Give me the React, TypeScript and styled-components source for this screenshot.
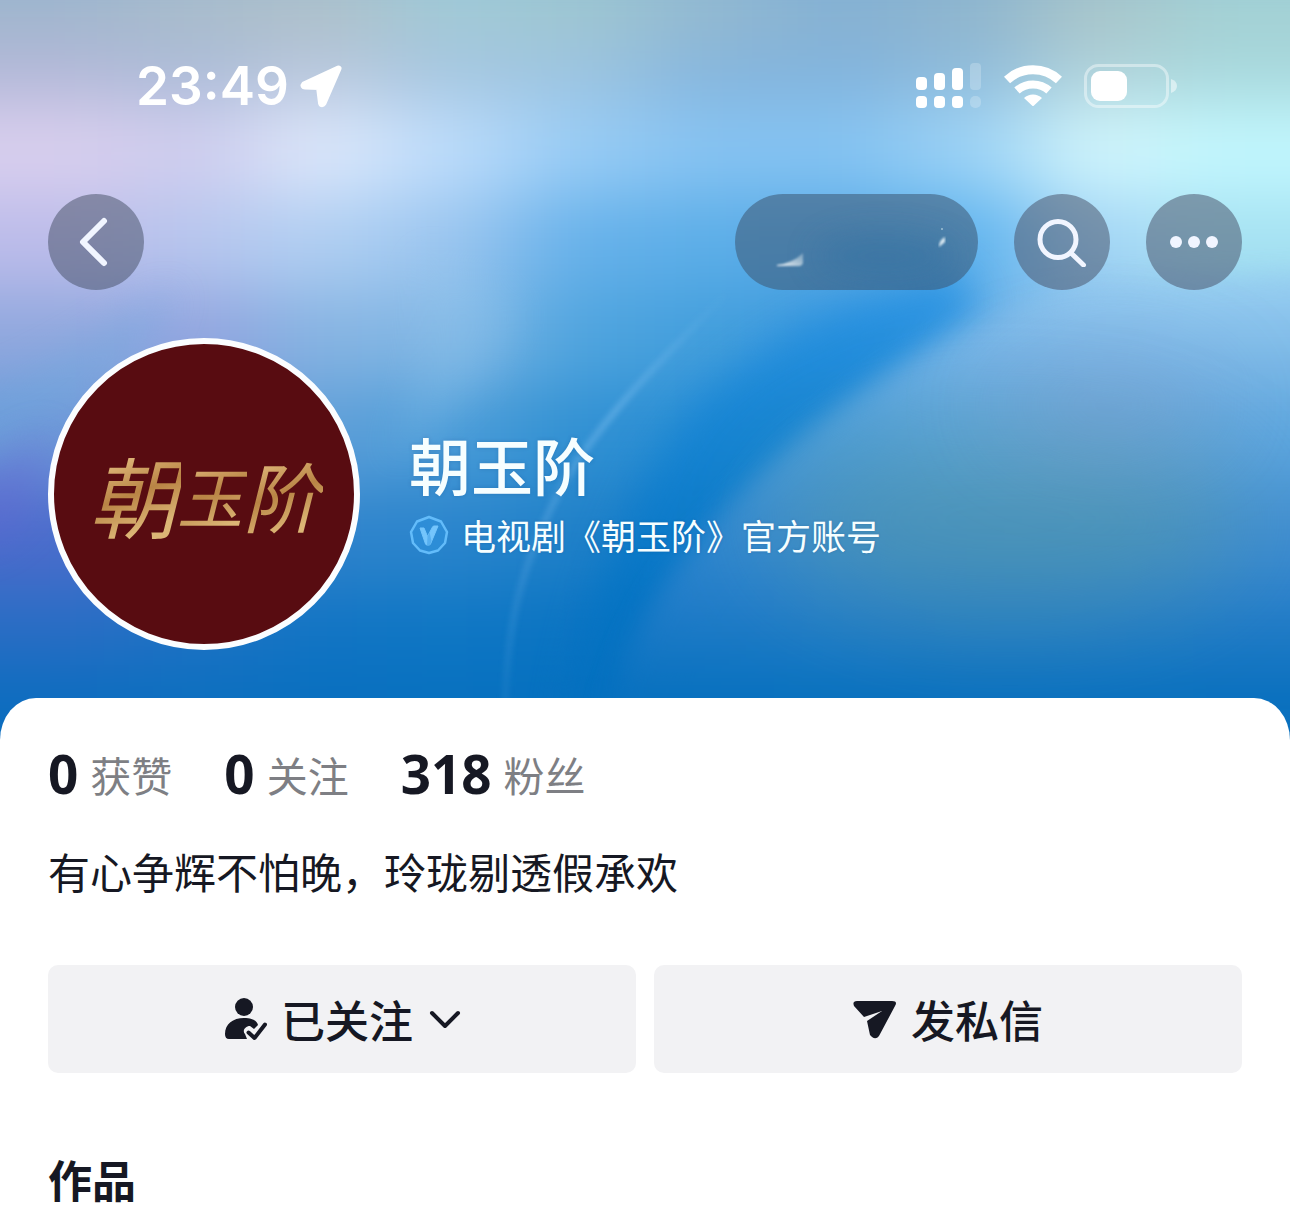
import React from "react";
import styled, { createGlobalStyle } from "styled-components";

const GlobalStyle = createGlobalStyle`
  *, *::before, *::after { box-sizing: border-box; }
  body {
    margin: 0;
    background: #ffffff;
    color: #161823;
    font-family: "Noto Sans CJK SC", sans-serif;
  }
  h1, h2, p, dl, dd, dt { margin: 0; font-weight: inherit; }
  button { font: inherit; color: inherit; border: 0; padding: 0; cursor: pointer; }
  svg { display: block; flex: none; }
`;

const Page = styled.main`
  min-height: 100vh;
`;

const Hero = styled.header`
  position: relative;
  overflow: hidden;
  padding: 58px 48px 90px;
  background: #2f8ed6;
`;

const Backdrop = styled.svg`
  position: absolute;
  inset: 0;
  width: 100%;
  height: 100%;
`;

const StatusBar = styled.div`
  position: relative;
  display: flex;
  align-items: center;
  justify-content: space-between;
  height: 56px;
  padding: 0 65px 0 88px;
  color: #ffffff;
`;

const Clock = styled.time`
  display: flex;
  align-items: center;
  gap: 10px;
  font: 600 53px/58px Inter, sans-serif;
`;

const Indicators = styled.div`
  display: flex;
  align-items: center;
  gap: 22px;
`;

const Toolbar = styled.nav`
  position: relative;
  display: flex;
  gap: 36px;
  margin-top: 80px;
`;

const RoundButton = styled.button<{ $wide?: boolean }>`
  display: flex;
  align-items: center;
  justify-content: center;
  width: ${(p) => (p.$wide ? "243px" : "96px")};
  height: 96px;
  margin-left: ${(p) => (p.$wide ? "auto" : "0")};
  border-radius: 48px;
  overflow: hidden;
  background: ${(p) => (p.$wide ? "rgba(62, 92, 120, 0.58)" : "rgba(70, 80, 104, 0.52)")};
  color: #f1f5ff;
`;

const Profile = styled.section`
  position: relative;
  display: flex;
  align-items: center;
  gap: 49px;
  margin-top: 48px;
`;

const Avatar = styled.div`
  display: flex;
  align-items: center;
  justify-content: center;
  flex: none;
  width: 312px;
  height: 312px;
  border: 6px solid #fbfdff;
  border-radius: 50%;
  background: #580c11;
`;

const Brush = styled.span<{ $size: number }>`
  margin: 0 -4px;
  padding: 0 4px;
  font-size: ${(p) => p.$size}px;
  line-height: 124px;
  font-style: italic;
  color: transparent;
  background: linear-gradient(160deg, #e6c184 20%, #b98445 50%, #dcb676 75%);
  background-clip: text;
  -webkit-background-clip: text;
`;

const Identity = styled.div`
  display: flex;
  flex-direction: column;
  gap: 10px;
  color: #f6feff;
`;

const Name = styled.h1`
  font-size: 62px;
  font-weight: 500;
  line-height: 72px;
  text-shadow: 0 0 4px rgba(0, 50, 110, 0.2);
`;

const Verified = styled.p`
  display: flex;
  align-items: center;
  gap: 12px;
  font-size: 35px;
  line-height: 50px;
  text-shadow: 0 0 3px rgba(0, 50, 110, 0.2);
`;

const Sheet = styled.section`
  position: relative;
  margin-top: -42px;
  padding: 46px 48px 16px;
  border-radius: 36px 36px 0 0 / 42px 42px 0 0;
  background: #ffffff;
`;

const Stats = styled.dl`
  display: flex;
  gap: 52px;
`;

const Stat = styled.div`
  display: flex;
  flex-direction: row-reverse;
  align-items: center;
  gap: 12px;
  line-height: 60px;
`;

const StatValue = styled.dd`
  font-family: "Noto Sans", sans-serif;
  font-size: 53px;
  font-weight: 700;
`;

const StatLabel = styled.dt`
  font-size: 41px;
  font-weight: 400;
  color: #7e7f84;
`;

const Bio = styled.p`
  margin-top: 37px;
  font-size: 42px;
  line-height: 60px;
`;

const Actions = styled.div`
  display: grid;
  grid-template-columns: 1fr 1fr;
  gap: 18px;
  margin-top: 64px;
`;

const ActionButton = styled.button`
  display: flex;
  align-items: center;
  justify-content: center;
  gap: 14px;
  height: 108px;
  border-radius: 10px;
  background: #f2f2f4;
  font-size: 44px;
  font-weight: 500;
  line-height: 60px;
`;

const WorksTitle = styled.h2`
  margin-top: 76px;
  font-size: 44px;
  font-weight: 700;
  line-height: 60px;
`;

const xs = [65, 194, 323, 452, 581, 710, 839, 968, 1097, 1226];
const rows: { y: number; h: number; c: string[] }[] = [
  { y: -60, h: 100, c: ["#9fb6cd", "#a9bccb", "#adc0c9", "#a1cad6", "#9ec6d0", "#94b9d0", "#86b1d2", "#8fb5cd", "#a8c4c9", "#a3d0d4"] },
  { y: 40, h: 65, c: ["#b3b8d8", "#abbcd8", "#b9c7dd", "#a5c6e0", "#9dc4e0", "#86b5dc", "#82b3dc", "#8fbbda", "#b0d2da", "#a8d8dc"] },
  { y: 105, h: 90, c: ["#d9cfee", "#cfcdee", "#dde8fb", "#bcdcfb", "#98ccf5", "#86c3f2", "#84c3f2", "#9dd3f6", "#d2f6fc", "#c2f7fe"] },
  { y: 195, h: 95, c: ["#bcbcea", "#b7c6ee", "#b0cff2", "#9ac5ef", "#66b1ea", "#5caee8", "#58aae6", "#5cb2ee", "#a6d6f6", "#a6e2f2"] },
  { y: 290, h: 95, c: ["#90a8de", "#93a4df", "#86b4e2", "#80b6e4", "#4fa4de", "#429edc", "#3b98de", "#6cb0e6", "#86bfe8", "#90caec"] },
  { y: 385, h: 100, c: ["#6c98d8", "#7094d8", "#5e9fd8", "#4a9cd8", "#3090d2", "#2a8ed4", "#2a8bd0", "#5aa3dc", "#70a8d4", "#62a8de"] },
  { y: 485, h: 100, c: ["#4c6ccc", "#3f78cb", "#2f83cc", "#2a85cc", "#1f80c8", "#1a7ec8", "#3a8ccb", "#4b94c4", "#5196c2", "#4892d2"] },
  { y: 585, h: 80, c: ["#2a6dc4", "#1e72c4", "#1275c4", "#0f77c4", "#0b74c3", "#0c75c2", "#1f7ec4", "#2780c0", "#2780c2", "#1c7ac4"] },
  { y: 665, h: 140, c: ["#0c6dbf", "#0c6fbf", "#086fbf", "#0770bf", "#0470bf", "#0470be", "#0871be", "#0c72bd", "#0e72be", "#0c6fbd"] },
];

function Wallpaper() {
  return (
    <Backdrop viewBox="0 0 1290 740" preserveAspectRatio="none" aria-hidden="true">
      <defs>
        <filter id="mesh" filterUnits="userSpaceOnUse" x="-200" y="-200" width="1700" height="1140" colorInterpolationFilters="sRGB">
          <feGaussianBlur stdDeviation="48 32" />
        </filter>
        <filter id="haze" filterUnits="userSpaceOnUse" x="-200" y="-200" width="1700" height="1140" colorInterpolationFilters="sRGB">
          <feGaussianBlur stdDeviation="50" />
        </filter>
        <filter id="soft" filterUnits="userSpaceOnUse" x="-200" y="-200" width="1700" height="1140" colorInterpolationFilters="sRGB">
          <feGaussianBlur stdDeviation="20" />
        </filter>
        <filter id="fine" filterUnits="userSpaceOnUse" x="-200" y="-200" width="1700" height="1140" colorInterpolationFilters="sRGB">
          <feGaussianBlur stdDeviation="13" />
        </filter>
        <filter id="hair" filterUnits="userSpaceOnUse" x="-200" y="-200" width="1700" height="1140" colorInterpolationFilters="sRGB">
          <feGaussianBlur stdDeviation="3" />
        </filter>
        <linearGradient id="band" x1="0" y1="290" x2="0" y2="720" gradientUnits="userSpaceOnUse">
          <stop offset="0" stopColor="#2591e2" />
          <stop offset="0.35" stopColor="#1282d2" />
          <stop offset="0.7" stopColor="#0474c4" />
          <stop offset="1" stopColor="#046fbe" />
        </linearGradient>
        <linearGradient id="lit" x1="0" y1="290" x2="0" y2="700" gradientUnits="userSpaceOnUse">
          <stop offset="0" stopColor="#92c8f0" />
          <stop offset="0.17" stopColor="#76b4e6" />
          <stop offset="0.37" stopColor="#5aa3dd" />
          <stop offset="0.56" stopColor="#418fd2" />
          <stop offset="0.76" stopColor="#2a80cb" />
          <stop offset="1" stopColor="#0971bf" />
        </linearGradient>
        <linearGradient id="fold" x1="0" y1="290" x2="0" y2="700" gradientUnits="userSpaceOnUse">
          <stop offset="0" stopColor="#a4d6ff" stopOpacity="0" />
          <stop offset="0.3" stopColor="#a4d6ff" stopOpacity="0.4" />
          <stop offset="0.7" stopColor="#a4d6ff" stopOpacity="0.2" />
          <stop offset="1" stopColor="#8cc4f0" stopOpacity="0.12" />
        </linearGradient>
      </defs>
      <g filter="url(#mesh)">
        {rows.map((row) =>
          row.c.map((fill, i) => (
            <rect
              key={`${row.y}-${i}`}
              x={i === 0 ? -140 : xs[i] - 65}
              y={row.y}
              width={i === 0 || i === 9 ? 272 : 131}
              height={row.h + 1}
              fill={fill}
            />
          ))
        )}
      </g>
      <path d="M-40 400C60 370 120 320 180 285L150 340C110 390 50 420-40 450Z" fill="#6aaade" opacity=".4" filter="url(#soft)" />
      <path d="M-30 485L50 430C45 500 30 530-30 550Z" fill="#6a62d4" opacity=".35" filter="url(#soft)" />
      <path d="M420 250C420 320 425 400 380 470C410 440 500 400 520 300Z" fill="#9dcdf0" opacity=".22" filter="url(#soft)" />
      <path d="M960 270C900 280 790 320 700 400C630 480 590 580 565 730L640 730C650 620 720 530 800 455C860 400 920 360 980 310Z" fill="url(#band)" opacity=".85" filter="url(#soft)" />
      <path d="M1400 270L1090 285C1010 310 930 345 870 385C800 430 730 500 690 550C640 610 615 670 600 740H1400Z" fill="url(#lit)" opacity=".72" filter="url(#fine)" />
      <ellipse cx="1010" cy="520" rx="240" ry="100" fill="#5b9b95" opacity=".34" filter="url(#haze)" />
      <ellipse cx="1110" cy="405" rx="120" ry="40" fill="#8592c4" opacity=".35" filter="url(#haze)" />
      <path d="M740 280C650 370 590 430 555 500C520 570 505 630 505 720" fill="none" stroke="url(#fold)" strokeWidth="5" filter="url(#hair)" />
    </Backdrop>
  );
}

function LocationArrow() {
  return (
    <svg width="44" height="44" viewBox="0 0 44 44" aria-hidden="true">
      <path d="M39.500 4.500L5 20.500C4 21.500 4.500 22.500 6 22.500L20 23L22 39C22.500 40.500 23.500 40.500 24.500 39Z" fill="currentColor" stroke="currentColor" strokeWidth="6" strokeLinejoin="round" />
    </svg>
  );
}

function Signal() {
  return (
    <svg width="66" height="46" viewBox="0 0 66 46" fill="currentColor" role="img" aria-label="信号">
      <rect x="0" y="14" width="11" height="13" rx="4" />
      <rect x="18" y="10" width="11" height="17" rx="4" />
      <rect x="36" y="5" width="11" height="22" rx="4" />
      <rect x="54" y="0" width="11" height="27" rx="4" opacity=".22" />
      <rect x="0" y="33" width="11" height="12" rx="4" />
      <rect x="18" y="33" width="11" height="12" rx="4" />
      <rect x="36" y="33" width="11" height="12" rx="4" />
      <rect x="54" y="33" width="11" height="12" rx="5" opacity=".22" />
    </svg>
  );
}

function Wifi() {
  return (
    <svg width="58" height="42" viewBox="0 0 58 42" role="img" aria-label="无线网络">
      <path d="M3 15A38 38 0 0 1 55 15" fill="none" stroke="currentColor" strokeWidth="9" />
      <path d="M13 25.500A24 24 0 0 1 45 25.500" fill="none" stroke="currentColor" strokeWidth="8" />
      <path d="M20 33A13 13 0 0 1 38 33L30 40.500Q29 41.500 28 40.500Z" fill="currentColor" />
    </svg>
  );
}

function Battery() {
  return (
    <svg width="93" height="44" viewBox="0 0 93 44" role="img" aria-label="电量">
      <rect x="1.500" y="1.500" width="82" height="41" rx="13" fill="none" stroke="currentColor" strokeWidth="3" opacity=".42" />
      <rect x="7" y="7" width="36" height="30" rx="9" fill="currentColor" />
      <path d="M87 15Q93 17 93 22T87 29Z" fill="currentColor" opacity=".5" />
    </svg>
  );
}

function VerifiedBadge() {
  return (
    <svg width="40" height="40" viewBox="0 0 40 40" role="img" aria-label="认证">
      <path d="M20 2L32 6.500L38 17L36 28L29 35.500L20 38L11 35.500L4 28L2 17L8 6.500Z" fill="#2f93dd" fillOpacity=".6" stroke="#63bcfa" strokeWidth="2.500" strokeLinejoin="round" />
      <path d="M11 13H15L18.500 21.500L23.500 12Q24 11 25 11H29L21.500 29Q21 30 20 30H18Q17 30 16.500 29Z" fill="#74c5fc" stroke="#74c5fc" strokeLinejoin="round" />
      <path d="M18.500 21.500L20.500 17L22.500 26L21 30H18Z" fill="#56aff0" />
    </svg>
  );
}

export default function App() {
  return (
    <Page>
      <GlobalStyle />
      <Hero>
        <Wallpaper />
        <StatusBar>
          <Clock>
            23:49
            <LocationArrow />
          </Clock>
          <Indicators>
            <Signal />
            <Wifi />
            <Battery />
          </Indicators>
        </StatusBar>
        <Toolbar>
          <RoundButton type="button" aria-label="返回">
            <svg width="48" height="52" viewBox="0 0 48 52" fill="none" stroke="currentColor" strokeWidth="6" strokeLinecap="round" strokeLinejoin="round">
              <path d="M32 5L11 26L32 47" />
            </svg>
          </RoundButton>
          <RoundButton type="button" $wide aria-label="更多操作">
            <svg width="243" height="96" viewBox="0 0 243 96">
              <defs>
                <filter id="smudge" x="-50%" y="-100%" width="200%" height="300%"><feGaussianBlur stdDeviation="16" /></filter>
                <filter id="speck"><feGaussianBlur stdDeviation="1" /></filter>
                <linearGradient id="shine" x1="0" y1="1" x2="1" y2="0">
                  <stop offset="0" stopColor="#f4f8fb" />
                  <stop offset="1" stopColor="#a9c2d2" stopOpacity=".5" />
                </linearGradient>
              </defs>
              <ellipse cx="150" cy="62" rx="70" ry="22" fill="#2f6fa2" opacity=".45" filter="url(#smudge)" />
              <path d="M42 71Q58 69 68 59V69Q67 72 64 72H42Z" fill="url(#shine)" filter="url(#speck)" />
              <path d="M204 53Q204 46 210 43V48Z" fill="#d9e8f1" filter="url(#speck)" />
              <circle cx="207" cy="35" r="1" fill="#9fc0d4" />
            </svg>
          </RoundButton>
          <RoundButton type="button" aria-label="搜索">
            <svg width="50" height="50" viewBox="0 0 50 50" fill="none" stroke="currentColor" strokeWidth="5" strokeLinecap="round">
              <circle cx="21" cy="22.500" r="18" />
              <path d="M34.500 36.500L46.500 48" />
            </svg>
          </RoundButton>
          <RoundButton type="button" aria-label="更多">
            <svg width="48" height="12" viewBox="0 0 48 12" fill="currentColor">
              <circle cx="6" cy="6" r="6" />
              <circle cx="24" cy="6" r="6" />
              <circle cx="42" cy="6" r="6" />
            </svg>
          </RoundButton>
        </Toolbar>
        <Profile>
          <Avatar>
            <Brush $size={88}>朝</Brush>
            <Brush $size={66}>玉</Brush>
            <Brush $size={76}>阶</Brush>
          </Avatar>
          <Identity>
            <Name>朝玉阶</Name>
            <Verified>
              <VerifiedBadge />
              电视剧《朝玉阶》官方账号
            </Verified>
          </Identity>
        </Profile>
      </Hero>
      <Sheet>
        <Stats>
          <Stat>
            <StatLabel>获赞</StatLabel>
            <StatValue>0</StatValue>
          </Stat>
          <Stat>
            <StatLabel>关注</StatLabel>
            <StatValue>0</StatValue>
          </Stat>
          <Stat>
            <StatLabel>粉丝</StatLabel>
            <StatValue>318</StatValue>
          </Stat>
        </Stats>
        <Bio>有心争辉不怕晚，玲珑剔透假承欢</Bio>
        <Actions>
          <ActionButton type="button">
            <svg width="44" height="44" viewBox="0 0 44 44" aria-hidden="true">
              <circle cx="21" cy="10" r="9" fill="#161823" />
              <path d="M21 21C30 21 34 24 35 28L31 32L27 29C22 29 19 34 22 37L24 42H6Q2 42 2 37C2 27 10 21 21 21Z" fill="#161823" />
              <path d="M25.500 35.500L31.500 41L42 27.500" fill="none" stroke="#161823" strokeWidth="4" strokeLinecap="round" strokeLinejoin="round" />
            </svg>
            已关注
            <svg width="34" height="24" viewBox="0 0 34 24" fill="none" stroke="#161823" strokeWidth="4" strokeLinecap="round" strokeLinejoin="round" aria-hidden="true">
              <path d="M5 6L18 19L31 6" />
            </svg>
          </ActionButton>
          <ActionButton type="button">
            <svg width="44" height="40" viewBox="0 0 44 40" fill="#161823" aria-hidden="true">
              <path d="M4 2H39Q45 2 42 7L26 37Q23 41 19 38Q18 37 17 36L14 22L29 12L11 18L1 7Q-1 2 4 2Z" />
            </svg>
            发私信
          </ActionButton>
        </Actions>
        <WorksTitle>作品</WorksTitle>
      </Sheet>
    </Page>
  );
}
